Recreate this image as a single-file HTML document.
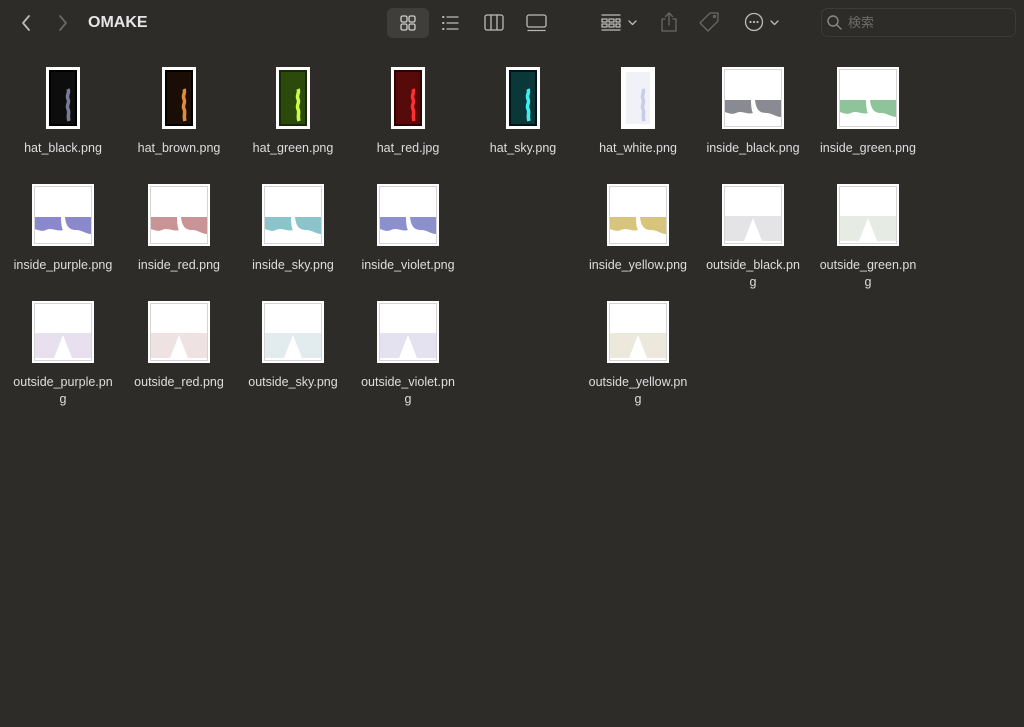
<!DOCTYPE html>
<html><head><meta charset="utf-8"><style>
body{margin:0;width:1024px;height:727px;background:#2e2c29;font-family:"Liberation Sans","Noto Sans CJK JP",sans-serif;overflow:hidden;position:relative;color:#dedede}
.it{position:absolute;width:114px;text-align:center;font-size:12.5px;line-height:17px}
.it svg{display:block;margin:0 auto 11px}
.t{position:absolute;color:#e6e6e6;font-weight:bold;font-size:16px;left:88px;top:14px}
</style></head><body>
<svg width="1024" height="45" style="position:absolute;left:0;top:0" fill="none" stroke-linecap="round" stroke-linejoin="round">
<path d="M29 16 L23 23 L29 30" stroke="#bdbbb8" stroke-width="1.8"/>
<path d="M60 16 L66 23 L60 30" stroke="#6a6865" stroke-width="1.8"/>
<rect x="387" y="8" width="42" height="30" rx="6" fill="#403e3b"/>
<g stroke="#d0cecb" stroke-width="1.3"><rect x="401" y="16" width="6" height="6" rx="1.5"/><rect x="409" y="16" width="6" height="6" rx="1.5"/><rect x="401" y="24" width="6" height="6" rx="1.5"/><rect x="409" y="24" width="6" height="6" rx="1.5"/></g>
<g stroke="#bdbbb8" stroke-width="1.3"><path d="M447 17h11M447 23h11M447 29h11"/><path d="M443 17h0.5M443 23h0.5M443 29h0.5" stroke-width="2"/>
<rect x="485" y="15" width="18" height="15" rx="2"/><path d="M491 15v15M497 15v15"/>
<rect x="527" y="15" width="19" height="12" rx="2"/><path d="M528 30.5h17" stroke-dasharray="2 1.2"/>
<path d="M602 15h18M602 30h18"/><rect x="602" y="19" width="5" height="3"/><rect x="609" y="19" width="5" height="3"/><rect x="616" y="19" width="4" height="3"/><rect x="602" y="24" width="5" height="3"/><rect x="609" y="24" width="5" height="3"/><rect x="616" y="24" width="4" height="3"/>
<path d="M629 21l3.5 3.5 3.5-3.5"/>
<circle cx="754" cy="22" r="8.5"/><path d="M771 21l3.5 3.5 3.5-3.5"/></g>
<g fill="#bdbbb8"><circle cx="750.5" cy="22" r="1.1"/><circle cx="754" cy="22" r="1.1"/><circle cx="757.5" cy="22" r="1.1"/></g>
<g stroke="#6a6865" stroke-width="1.3"><path d="M665 19h-3v12h14v-12h-3M669 25V13M665.5 16.5l3.5-3.5 3.5 3.5"/>
<path d="M710 13h8v8l-10 10-8-8z"/><circle cx="714.5" cy="16.5" r="1"/></g>
<rect x="821.5" y="8.5" width="194" height="28" rx="6" stroke="#3d3b38" fill="#2e2c29"/>
<circle cx="833" cy="21" r="5" stroke="#8a8885" stroke-width="1.4"/><path d="M837 25l4 4" stroke="#8a8885" stroke-width="1.4"/>
<text x="848" y="27" fill="#6e6c69" font-size="13" font-family="Noto Sans CJK JP,sans-serif" stroke="none">検索</text>
</svg>
<div class="t">OMAKE</div>

<div id="c"></div>
<script>
const hats=[["hat_black.png","#7a7a9a","#151518","#000"],["hat_brown.png","#e08a3a","#2a1508","#000"],["hat_green.png","#c8ff40","#3a6010","#1a2a08"],["hat_red.jpg","#ff3030","#701010","#300000"],["hat_sky.png","#40f0f0","#105050","#001418"],["hat_white.png","#c8cce8","#e8eaf4","#fff"]];
const xs=[63,179,293,408,523,638,753,868];
let h="";
function item(cx,top,svg,label){h+=`<div class="it" style="left:${cx-57}px;top:${top}px">${svg}${label}</div>`;}
function hat(c){return `<svg width="34" height="62" viewBox="0 0 34 62"><rect x="0" y="0" width="34" height="62" fill="#fff"/><rect x="3" y="3" width="28" height="56" fill="${c[3]}"/><rect x="5" y="5" width="24" height="52" fill="${c[2]}" opacity=".6"/><path d="M22 22c2 4-2 6 0 10s-2 6 0 10 -1 6 1 12" stroke="${c[1]}" stroke-width="3.5" fill="none"/></svg>`;}
function ins(col){return `<svg width="62" height="62" viewBox="0 0 62 62"><rect width="62" height="62" fill="#fff"/><rect x="2.5" y="2.5" width="57" height="57" fill="none" stroke="#d4d4d4"/><path d="M3 33H29C29 40 30 45 31 46C25 48 20 43 14 46C10 48 6 46 3 45Z" fill="${col}"/><path d="M33 33H59V50C54 50 50 46 44 46C38 46 34 43 33 33Z" fill="${col}"/></svg>`;}
function out(col){return `<svg width="62" height="62" viewBox="0 0 62 62"><rect width="62" height="62" fill="#fff"/><rect x="2.5" y="2.5" width="57" height="57" fill="none" stroke="#d4d4d4"/><path d="M3 32H59V57H40L31 34L22 57H3Z" fill="${col}"/></svg>`;}
hats.forEach((c,i)=>item(xs[i],67,hat(c),c[0]));
item(xs[6],67,ins("#8a8a92"),"inside_black.png");
item(xs[7],67,ins("#8fc49a"),"inside_green.png");
[["inside_purple.png","#8c88cc",0],["inside_red.png","#c89496",1],["inside_sky.png","#8cc4cc",2],["inside_violet.png","#8c90cc",3],["inside_yellow.png","#d8c47c",5]].forEach(a=>item(xs[a[2]],184,ins(a[1]),a[0]));
item(xs[6],184,out("#e4e4e6"),"outside_black.pn<br>g");
item(xs[7],184,out("#e6ebe4"),"outside_green.pn<br>g");
[["outside_purple.pn<br>g","#e8e0ee",0],["outside_red.png","#efe2e2",1],["outside_sky.png","#e2ecee",2],["outside_violet.pn<br>g","#e4e2f0",3],["outside_yellow.pn<br>g","#ece8dc",5]].forEach(a=>item(xs[a[2]],301,out(a[1]),a[0]));
document.getElementById("c").innerHTML=h;
</script>
</body></html>
